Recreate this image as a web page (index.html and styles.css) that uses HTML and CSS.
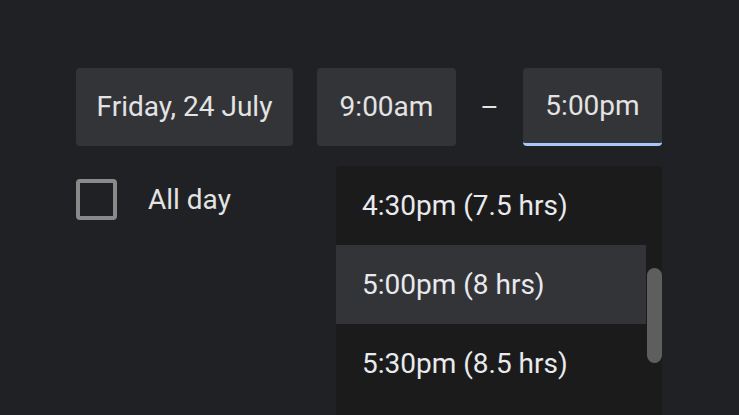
FILE: index.html
```html
<!doctype html>
<html lang="en">
<head>
	<meta charset="UTF-8" />
	<title>Event time</title>
	<link rel="stylesheet" href="styles.css">
</head>
<body>
	<div class="editor">
		<!--date and time-->
		<div class="when">
			<div class="field date">Friday, 24 July</div>
			<div class="field time">9:00am</div>
			<span class="dash">–</span>
			<div class="endwrap">
				<div class="field time active">5:00pm</div>
				<!--end time menu-->
				<ul class="menu">
					<li>4:30pm (7.5 hrs)</li>
					<li class="current">5:00pm (8 hrs)</li>
					<li>5:30pm (8.5 hrs)</li>
				</ul>
			</div>
		</div>

		<!--all day-->
		<label class="allday">
			<span class="box"></span>
			<span>All day</span>
		</label>
	</div>
</body>
</html>
```

FILE: styles.css
```css
*{
	padding: 0;
	margin: 0;
	box-sizing: border-box;
}
ul{
	list-style: none;
}
html, body{
	height: 100%;
}
body{
	background-color: #202124;
	color: #e3e3e3;
	font-family: Roboto, "Noto Sans", sans-serif;
	overflow: hidden;
}

.editor{
	padding: 68px 0 0 76px;
}

/*date and time row*/
.when{
	display: flex;
	align-items: center;
}
.field{
	height: 78px;
	background-color: #333438;
	border-radius: 4px;
	font-size: 28px;
	line-height: 78px;
	text-align: center;
	white-space: nowrap;
}
.date{
	width: 217px;
	margin-right: 24px;
}
.time{
	width: 139px;
}
.field.active{
	border-bottom: 3px solid #a8c7fa;
	line-height: 75px;
}
.dash{
	width: 67px;
	text-align: center;
	font-size: 28px;
}
.endwrap{
	position: relative;
}

/*menu*/
.menu{
	position: absolute;
	top: 98px;
	right: 0;
	width: 326px;
	height: 260px;
	background-color: #1b1b1b;
	border-radius: 4px 4px 0 0;
	overflow: hidden;
	font-size: 28px;
	color: #e8eaed;
}
.menu li{
	width: 310px;
	height: 79px;
	line-height: 79px;
	padding-left: 26px;
	white-space: nowrap;
}
.menu li.current{
	background-color: #333438;
}
.menu::after{
	content: "";
	position: absolute;
	top: 102px;
	right: 0;
	width: 15px;
	height: 95px;
	background-color: #5e5e5e;
	border-radius: 8px;
}

/*all day*/
.allday{
	display: flex;
	align-items: center;
	gap: 31px;
	margin-top: 33px;
	font-size: 28px;
}
.box{
	width: 41px;
	height: 41px;
	border: 4px solid #8a8a8a;
	border-radius: 4px;
}
```
